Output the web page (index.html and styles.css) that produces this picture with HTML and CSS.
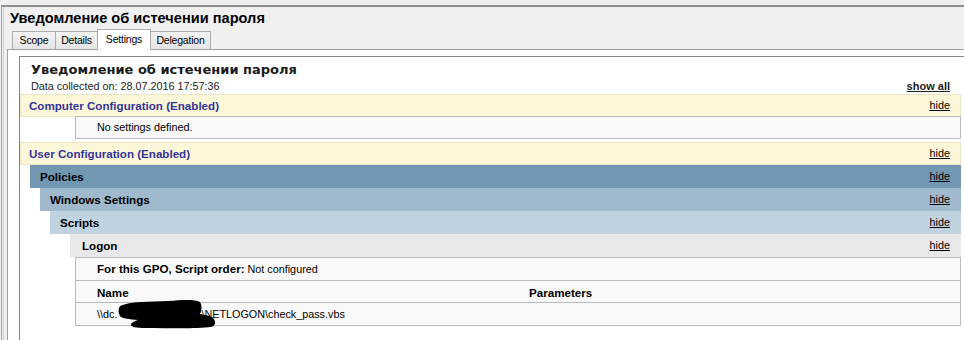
FILE: index.html
```html
<!DOCTYPE html>
<html lang="ru">
<head>
    <meta charset="UTF-8">
    <title>Уведомление об истечении пароля</title>
    <link rel="stylesheet" href="styles.css">
</head>
<body>
    <div class="window">
        <div class="pane">
            <div class="caption">Уведомление об истечении пароля</div>
            <div class="tabs">
                <div class="tab scope">Scope</div>
                <div class="tab details">Details</div>
                <div class="tab settings active">Settings</div>
                <div class="tab delegation">Delegation</div>
            </div>
            <div class="tab-body">
                <div class="viewer">
                    <div class="report">
                        <div class="report-title">Уведомление об истечении пароля</div>
                        <div class="collected">
                            <span>Data collected on: 28.07.2016 17:57:36</span>
                            <a class="show-all">show all</a>
                        </div>

                        <div class="he0"><span>Computer Configuration (Enabled)</span><a class="hide">hide</a></div>
                        <div class="box first">
                            <div class="box-row">No settings defined.</div>
                        </div>

                        <div class="he0 spaced"><span>User Configuration (Enabled)</span><a class="hide">hide</a></div>
                        <div class="he1"><span>Policies</span><a class="hide">hide</a></div>
                        <div class="he2"><span>Windows Settings</span><a class="hide">hide</a></div>
                        <div class="he3"><span>Scripts</span><a class="hide">hide</a></div>
                        <div class="he4"><span>Logon</span><a class="hide">hide</a></div>
                        <div class="box">
                            <div class="box-row"><b>For this GPO, Script order:</b> Not configured</div>
                            <div class="box-row grid head"><b>Name</b><b>Parameters</b></div>
                            <div class="box-row grid last">
                                <span>\\dc.<span class="gap"></span>\NETLOGON\check_pass.vbs</span><span></span>
                                <svg class="blot" width="104" height="34" viewBox="0 0 104 34">
                                    <path d="M4,9 C14,4 34,5 52,4 C66,3 78,2 84,5 C86,8 86,13 84,17 C90,18 96,19 98,22 C100,26 99,29 95,30 C80,32 52,31 30,31 C20,31 14,30 15,27 C16,25 19,24 22,23 C14,22 6,22 4,19 C2,16 2,12 4,9 Z" fill="#000"/>
                                </svg>
                            </div>
                        </div>
                    </div>
                </div>
            </div>
        </div>
    </div>
</body>
</html>
```

FILE: styles.css
```css
html, body {
    margin: 0;
    height: 100%;
    overflow: hidden;
}

body {
    background: #f0f0f0;
    font-family: "Liberation Sans", Arial, sans-serif;
    font-size: 10.8px;
    color: #000;
}

.window {
    margin: 5px 0 0 1px;
    height: 335px;
    box-sizing: border-box;
    border-top: 2px solid #8d8d8d;
    border-left: 1px solid #a3a3a3;
    padding-left: 1px;
}

.pane {
    height: 100%;
    border-left: 1px solid #d0d0d0;
    display: flex;
    flex-direction: column;
}

.caption {
    height: 22px;
    line-height: 22px;
    padding-left: 6px;
    font-size: 14.6px;
    font-weight: bold;
}

/* tab strip */
.tabs {
    display: flex;
    align-items: flex-end;
    height: 21px;
    padding-left: 8px;
    margin-bottom: -1px;
    position: relative;
    z-index: 1;
}

.tab {
    box-sizing: border-box;
    height: 18px;
    line-height: 17px;
    margin: 0 -1px 1px 0;
    border: 1px solid #acacac;
    border-bottom: 0;
    background: linear-gradient(#f3f3f3, #e5e5e5);
    text-align: center;
    font-size: 10.5px;
    letter-spacing: -0.2px;
}

.tab.scope { width: 44px; }
.tab.details { width: 43px; }
.tab.settings { width: 54px; }
.tab.delegation { width: 61px; }

.tab.active {
    height: 21px;
    line-height: 18px;
    margin-bottom: 0;
    background: #fff;
    position: relative;
    z-index: 2;
}

.tab-body {
    flex: 1;
    margin-left: 3px;
    padding: 6px 0 0 11px;
    background: #fff;
    border-top: 1px solid #9f9f9f;
    border-left: 1px solid #9f9f9f;
    display: flex;
}

.viewer {
    flex: 1;
    border-top: 1px solid #828282;
    border-left: 1px solid #828282;
    background: #fff;
    overflow: hidden;
}

/* report */
.report {
    width: 941px;
}

.report-title {
    padding: 4px 0 0 11px;
    height: 18px;
    line-height: 18px;
    font-family: "DejaVu Sans", Verdana, sans-serif;
    font-size: 13px;
    font-weight: bold;
    color: #1a1a1a;
}

.collected {
    height: 15px;
    line-height: 15px;
    padding: 0 11px;
    display: flex;
    justify-content: space-between;
    color: #222;
}

.show-all {
    font-weight: bold;
    text-decoration: underline;
    font-size: 11px;
}

.he0, .he1, .he2, .he3, .he4 {
    height: 21px;
    line-height: 21px;
    display: flex;
    justify-content: space-between;
    padding-right: 10px;
    font-size: 11.6px;
    font-weight: bold;
}

.hide {
    font-weight: normal;
    font-size: 10.8px;
    text-decoration: underline;
    color: #000;
}

.he0 {
    padding-left: 8px;
    background: #fdf7d9;
    color: #333399;
    border: 1px solid #ebe5c6;
}

.he0.spaced {
    margin-top: 3px;
}

.he1 {
    margin-left: 10px;
    padding-left: 9px;
    background: #7197b3;
    border: 1px solid #7197b3;
}

.he2 {
    margin-left: 20px;
    padding-left: 9px;
    background: #a0b9cc;
    border: 1px solid #a0b9cc;
}

.he3 {
    margin-left: 30px;
    padding-left: 9px;
    background: #c0d3e0;
    border: 1px solid #c0d3e0;
}

.he4 {
    margin-left: 50px;
    padding-left: 11px;
    background: #e8e8e8;
    border: 1px solid #e8e8e8;
}

.box {
    margin-left: 55px;
    background: #f9f9f9;
    border: 1px solid #bbbbbb;
}

.box.first {
    margin-top: -1px;
}

.box-row {
    height: 22px;
    line-height: 22px;
    padding-left: 21px;
    border-bottom: 1px solid #bbbbbb;
}

.box.first .box-row {
    height: 21px;
    line-height: 21px;
    border-bottom: 0;
}

.box-row b {
    font-size: 11.6px;
}

.grid {
    display: grid;
    grid-template-columns: 432px 1fr;
}

.grid.head {
    height: 21px;
    line-height: 23px;
}

.grid.last {
    border-bottom: 0;
    position: relative;
}

.gap {
    display: inline-block;
    width: 84px;
}

.blot {
    position: absolute;
    left: 40px;
    top: -6px;
}
```
